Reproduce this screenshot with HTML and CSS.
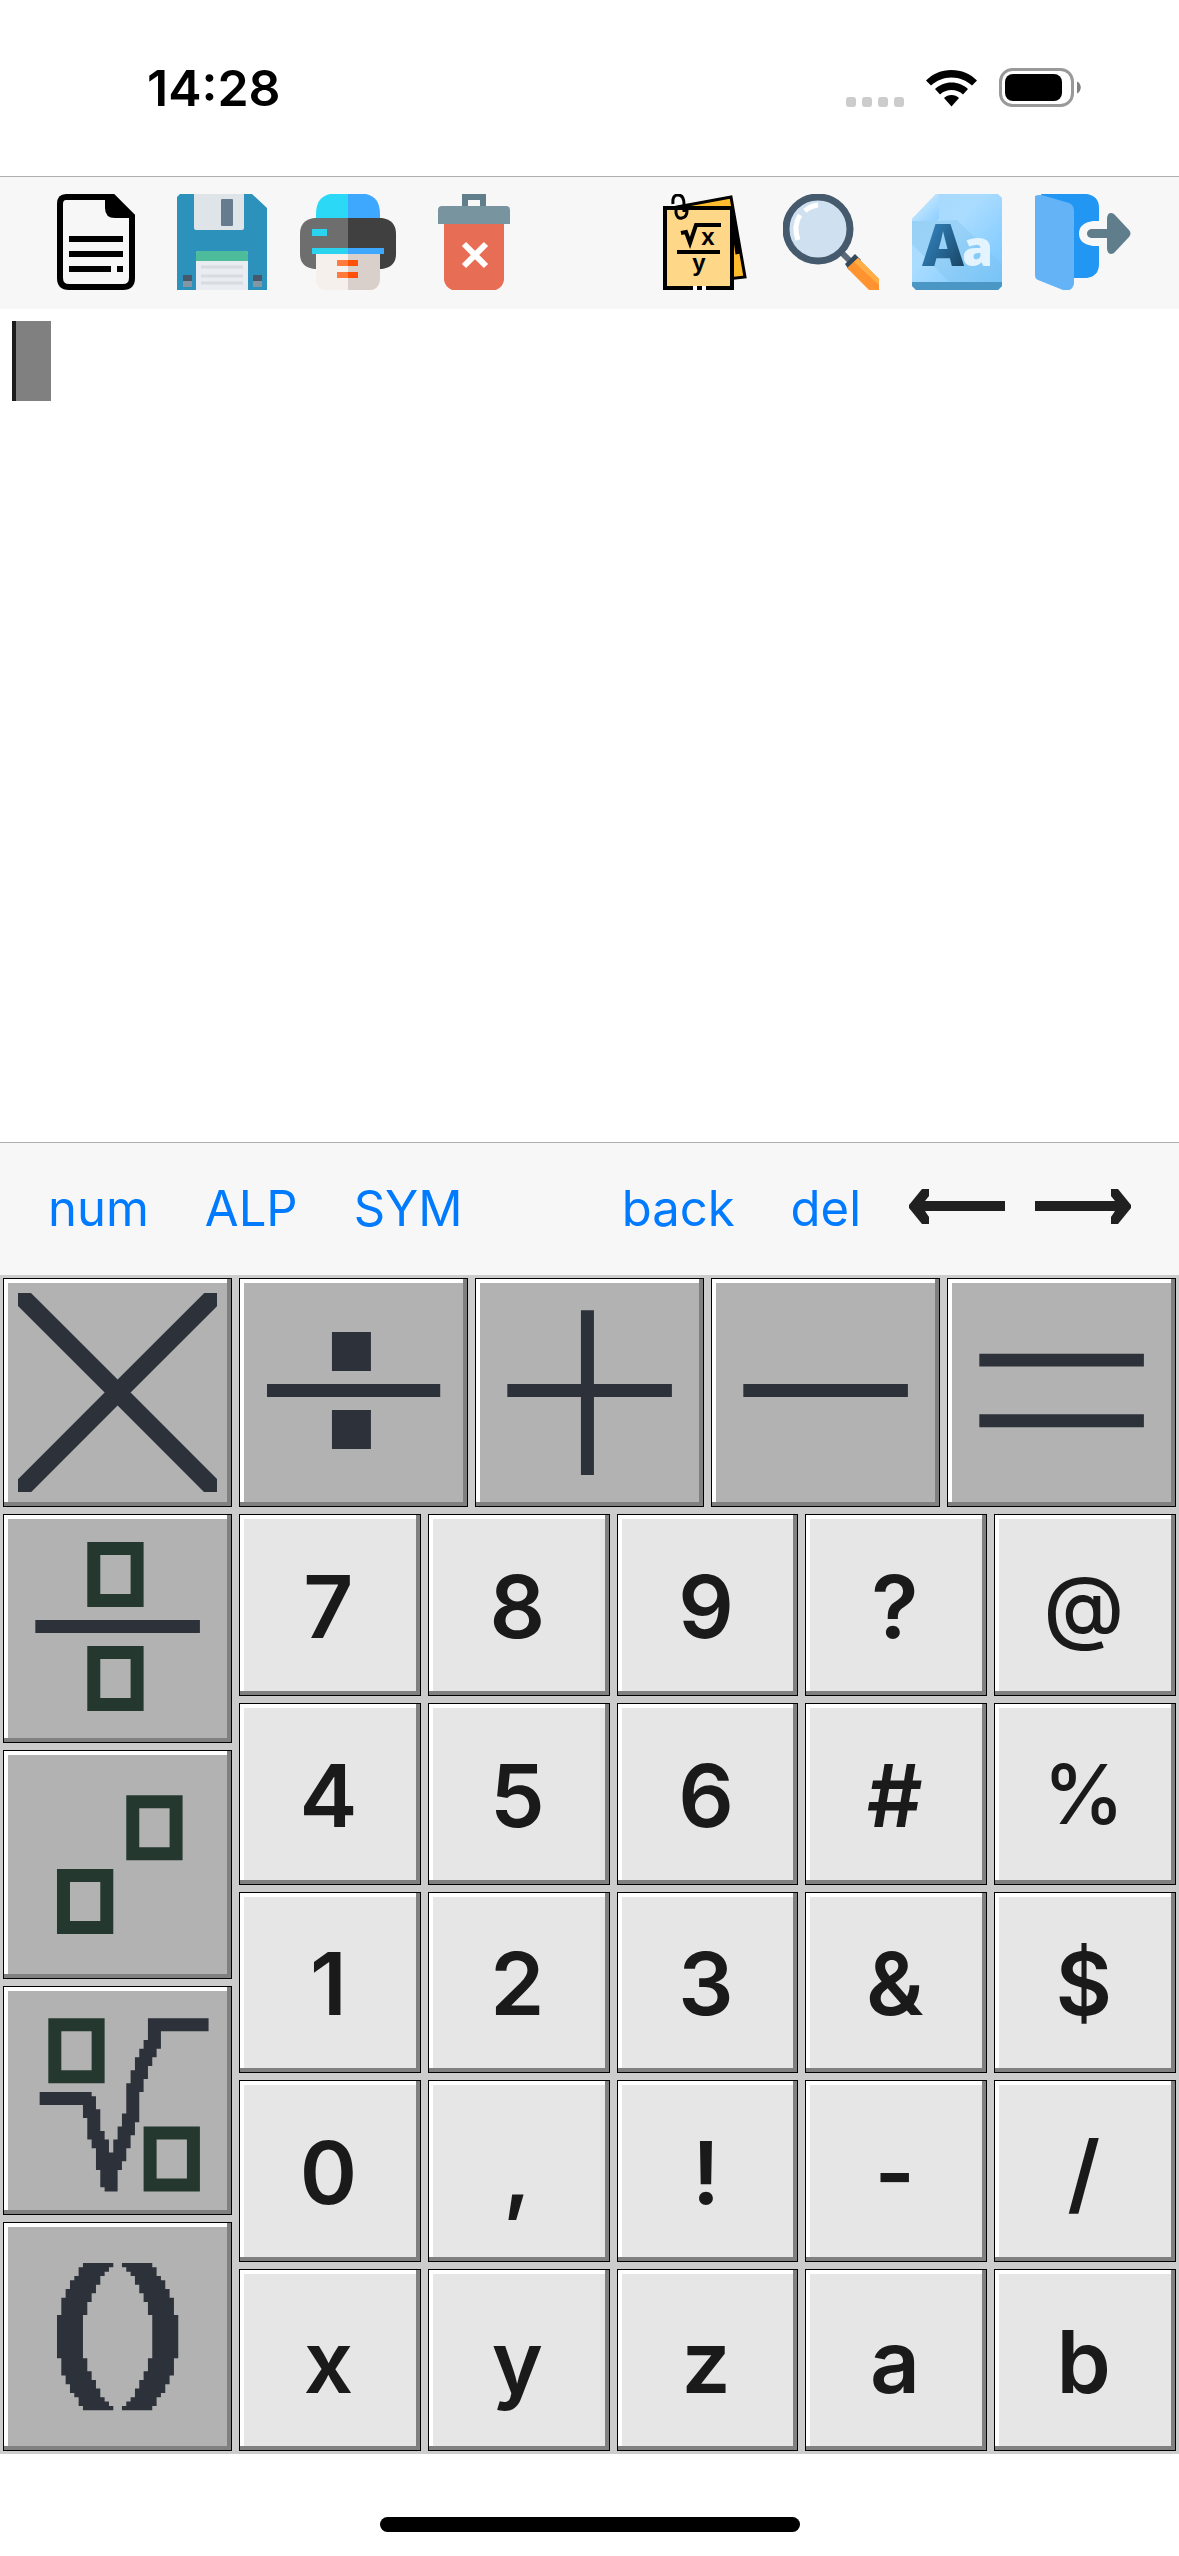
FILE: index.html
```html
<!DOCTYPE html>
<html lang="en">
<head>
    <meta charset="UTF-8" />
    <meta name="viewport" content="width=device-width, initial-scale=1.0"/>
    <title>Math Editor</title>
    <link rel="stylesheet" href="styles.css">
</head>
<body>
<header class="status-bar">
    <span class="time">14:28</span>
    <div class="status-icons">
        <span class="dots"><i></i><i></i><i></i><i></i></span>
        <svg class="wifi" viewBox="0 0 51 38" aria-hidden="true">
            <path d="M25.500 1C35.500 1 44.500 5 51 11.500L46 16.500C40.500 11.500 33.500 8.500 25.500 8.500S10.500 11.500 5 16.500L0 11.500C6.500 5 15.500 1 25.500 1z"/>
            <path d="M25.500 13.500C32 13.500 37.500 16 42 20L37 25.500C34 22.500 30 21 25.500 21S17 22.500 14 25.500L9 20C13.500 16 19 13.500 25.500 13.500z"/>
            <path d="M25.500 26C28.500 26 31 27 33 29L25.500 37.500 18 29C20 27 22.500 26 25.500 26z"/>
        </svg>
        <svg class="battery" viewBox="0 0 82 39" aria-hidden="true">
            <rect x="1.500" y="1.500" width="72" height="36" rx="12" fill="none" stroke="#999" stroke-width="3"/>
            <rect x="6" y="6" width="57" height="27" rx="8"/>
            <path d="M78 13.500C83 15.500 83 23.500 78 25.500z" fill="#808080"/>
        </svg>
    </div>
</header>

<nav class="toolbar">
    <div class="group">
        <button type="button" class="icon-btn" aria-label="New">
            <svg viewBox="0 0 96 96">
                <path d="M18 3H65L84 22V84Q84 93 75 93H21Q12 93 12 84V10Q12 3 18 3z" fill="none" stroke="#000" stroke-width="6"/>
                <path d="M57 0H65L87 22V24H67Q57 24 57 14z"/>
                <path d="M21 42h54v6H21zM21 57h54v6H21zM21 72h42v6H21zM69 72h6v6h-6z"/>
            </svg>
        </button>
        <button type="button" class="icon-btn" aria-label="Save">
            <svg viewBox="0 0 96 96">
                <path d="M6 0H78L93 14V96H3V3z" fill="#2c92bc"/>
                <path d="M20 0H70V34Q70 36 68 36H22Q20 36 20 34z" fill="#dfe4e8"/>
                <rect x="47" y="5" width="12" height="27" rx="1" fill="#667b8e"/>
                <path d="M22 96V60Q22 57 25 57H71Q74 57 74 60V96z" fill="#e9edf2"/>
                <path d="M22 67V60Q22 57 25 57H71Q74 57 74 60V67z" fill="#4cbc9a"/>
                <path d="M27 73H69M27 82H69M27 89H69" stroke="#d8dce1" stroke-width="3"/>
                <path d="M9 81h9v6H9zM79 81h9v6h-9z" fill="#46586a"/>
                <path d="M9 87h9v6H9zM79 87h9v6h-9z" fill="#8495a3"/>
            </svg>
        </button>
        <button type="button" class="icon-btn" aria-label="Print">
            <svg viewBox="0 0 96 96">
                <path d="M48 0H30Q16 3 16 20V26H48z" fill="#2bd9f7"/>
                <path d="M48 0H66Q80 3 80 20V26H48z" fill="#3ea8ff"/>
                <path d="M48 24H14Q0 26 0 40V60Q0 73 14 75H48z" fill="#6e6e6e"/>
                <path d="M48 24H82Q96 26 96 40V60Q96 73 82 75H48z" fill="#404040"/>
                <path d="M48 60H16V86Q17 94 24 96H48z" fill="#f5f0ec"/>
                <path d="M48 60H80V86Q79 94 72 96H48z" fill="#d9d0cb"/>
                <path d="M12 35h15v7H12zM12 54h36v6H12z" fill="#2bd4ee"/>
                <path d="M48 54h36v6H48z" fill="#3ea8ff"/>
                <path d="M37 66h11v6H37zM37 78h11v6H37z" fill="#ff7a3c"/>
                <path d="M48 66h10v6H48zM48 78h10v6H48z" fill="#ff5008"/>
            </svg>
        </button>
        <button type="button" class="icon-btn" aria-label="Delete">
            <svg viewBox="0 0 96 96">
                <path d="M36 0H60V14H36zM42 6V12H54V6z" fill="#617f8b" fill-rule="evenodd"/>
                <path d="M18 30H78V86Q77 93 70 96H26Q19 93 18 86z" fill="#e76e55"/>
                <path d="M12 30V16Q12 12 16 12H80Q84 12 84 16V30z" fill="#78949e"/>
                <path d="M38 50L60 72M60 50L38 72" stroke="#fff" stroke-width="6"/>
            </svg>
        </button>
    </div>
    <div class="group">
        <button type="button" class="icon-btn" aria-label="Formulas">
            <svg viewBox="0 0 96 96">
                <path d="M20 13L74 3 88 83 62 86z" fill="#fdbb2d" stroke="#000" stroke-width="3"/>
                <path d="M74 14L81 60" stroke="#000" stroke-width="5"/>
                <path d="M8 14H75V94H8z" fill="#ffd788" stroke="#000" stroke-width="4"/>
                <path d="M36 94h4M45 94h4" stroke="#fff" stroke-width="4"/>
                <path d="M16 10Q15 1 21 1T27 10V18M19 12V19Q20 25 25 24T30 17V12" fill="none" stroke="#000" stroke-width="3"/>
                <path d="M24 39L29 38 33 49 39 31H64" fill="none" stroke="#000" stroke-width="4"/>
                <path d="M20 58H63" stroke="#000" stroke-width="4"/>
                <text class="formula" x="51" y="51">x</text>
                <text class="formula" x="42" y="77">y</text>
            </svg>
        </button>
        <button type="button" class="icon-btn" aria-label="Search">
            <svg viewBox="0 0 96 96">
                <path d="M58 58L70 70" stroke="#5b6b7a" stroke-width="6"/>
                <path d="M62 70L72 60 78 66 66 76z" fill="#34485c"/>
                <path d="M64 74L75 64 96 85V96H86z" fill="#ff9330"/>
                <path d="M71 68L75 64 96 85V91z" fill="#ffad45"/>
                <circle cx="35" cy="35" r="32" fill="#cfe1f1" stroke="#465a6e" stroke-width="7"/>
                <path d="M15 46Q10 32 17 21M22 17Q27 12 35 11" fill="none" stroke="#fff" stroke-width="5"/>
            </svg>
        </button>
        <button type="button" class="icon-btn" aria-label="Font">
            <svg viewBox="0 0 96 96">
                <defs>
                    <linearGradient id="page" x1="0" y1="0" x2="1" y2="1">
                        <stop offset="0" stop-color="#a5d8fb"/>
                        <stop offset="0.4" stop-color="#aadcff"/>
                        <stop offset="1" stop-color="#70c4ff"/>
                    </linearGradient>
                    <linearGradient id="fold" x1="0" y1="0" x2="1" y2="1">
                        <stop offset="0.3" stop-color="#c4e7ff"/>
                        <stop offset="1" stop-color="#8cceff"/>
                    </linearGradient>
                    <linearGradient id="letter" x1="0" y1="0" x2="1" y2="1">
                        <stop offset="0.3" stop-color="#2e7ab0"/>
                        <stop offset="1" stop-color="#143a55"/>
                    </linearGradient>
                </defs>
                <path d="M27 0H89L93 4V92L89 96H7L3 92V25z" fill="url(#page)"/>
                <path d="M3 27H30L48 26 93 70V88H40L3 50z" fill="#7fbfe8" opacity="0.35"/>
                <path d="M3 88H93V92L89 96H7L3 92z" fill="#4a96c4"/>
                <path d="M27 0H30V24Q29 27 26 27H3V25z" fill="url(#fold)"/>
                <text class="big-a" x="13" y="72" fill="url(#letter)">A</text>
                <text class="small-a" x="53" y="72">a</text>
            </svg>
        </button>
        <button type="button" class="icon-btn" aria-label="Exit">
            <svg viewBox="0 0 96 96">
                <path d="M6 0H52Q64 2 64 14V27H58Q44 29 44 39.500T58 52H64V70Q64 82 52 84H30z" fill="#2196f3"/>
                <path d="M0 2Q4 0 10 2L34 9Q39 11 39 17V90Q37 98 28 96L3 86Q0 85 0 81z" fill="#64b3f7"/>
                <path d="M56 35H72V24Q73 17 79 20L94 36Q97 39.500 94 43L79 59Q73 62 72 55V44H56Q52 43 52 39.500T56 35z" fill="#607d8b"/>
            </svg>
        </button>
    </div>
</nav>

<main class="editor">
    <div class="caret"></div>
</main>

<nav class="toolbar">
    <div class="group modes">
        <button type="button" class="text-btn">num</button>
        <button type="button" class="text-btn">ALP</button>
        <button type="button" class="text-btn">SYM</button>
    </div>
    <div class="group">
        <div class="group edits">
            <button type="button" class="text-btn">back</button>
            <button type="button" class="text-btn">del</button>
        </div>
        <button type="button" class="icon-btn" aria-label="Move left">
            <svg viewBox="0 0 96 96">
                <path d="M0 45L13 29H20V36L16 41H96V51H16L20 57V64H13L0 48z" fill="#202020"/>
            </svg>
        </button>
        <button type="button" class="icon-btn" aria-label="Move right">
            <svg viewBox="0 0 96 96">
                <path d="M96 45L83 29H76V36L80 41H0V51H80L76 57V64H83L96 48z" fill="#202020"/>
            </svg>
        </button>
    </div>
</nav>

<section class="keyboard">
    <button type="button" class="key key-dark" aria-label="Multiply">
        <svg viewBox="0 0 46 46"><path d="M0 0H3L23 20 43 0H46V3L26 23 46 43V46H43L23 26 3 46H0V43L20 23 0 3zM20 20h6v6h-6z"/></svg>
    </button>
    <button type="button" class="key key-dark" aria-label="Divide">
        <svg viewBox="0 0 46 46"><path d="M18 9h9v9h-9zM3 21h40v3H3zM18 27h9v9h-9z"/></svg>
    </button>
    <button type="button" class="key key-dark" aria-label="Plus">
        <svg viewBox="0 0 46 46"><path d="M4 21h38v3H4zM21 4h3v38h-3z"/></svg>
    </button>
    <button type="button" class="key key-dark" aria-label="Minus">
        <svg viewBox="0 0 46 46"><path d="M4 21h38v3H4z"/></svg>
    </button>
    <button type="button" class="key key-dark" aria-label="Equals">
        <svg viewBox="0 0 46 46"><path d="M4 14h38v3H4zM4 28h38v3H4z"/></svg>
    </button>

    <button type="button" class="key key-dark key-side" aria-label="Fraction">
        <svg viewBox="0 0 46 46">
            <path d="M4 21h38v3H4z"/>
            <path class="slot" d="M17.500 4.500h10v12h-10zM17.500 28.500h10v12h-10z"/>
        </svg>
    </button>
    <button type="button" class="key key-dark key-side" aria-label="Power">
        <svg viewBox="0 0 46 46">
            <path class="slot" d="M26.500 8.500h10v12h-10zM10.500 25.500h10v12h-10z"/>
        </svg>
    </button>
    <button type="button" class="key key-dark key-side" aria-label="Root">
        <svg viewBox="0 0 46 46">
            <path d="M5 21H17V22H18V25H19V30H20V32H21V35H22V32H23V29H24V26H25V19H26V16H27V13H28V11H29V9H30V4H44V7H33V11H32V13H31V15H30V18H29V21H28V28H27V31H26V34H25V37H24V39H23V44H20V43H19V39H18V34H17V32H16V27H15V24H5z"/>
            <path class="slot" d="M8.500 5.500h10v12h-10zM30.500 30.500h10v12h-10z"/>
        </svg>
    </button>
    <button type="button" class="key key-dark key-side" aria-label="Brackets">
        <svg viewBox="0 0 46 46">
            <path d="M15 6H22V7H21V8H20V9H19V11H18V13H17V15H16V18H15V28H16V31H17V33H18V35H19V37H20V38H21V39H22V40H15V39H14V37H13V36H12V34H11V32H10V28H9V18H10V14H11V12H12V10H13V9H14V7H15z"/>
            <path d="M31 6H24V7H25V8H26V9H27V11H28V13H29V15H30V18H31V28H30V31H29V33H28V35H27V37H26V38H25V39H24V40H31V39H32V37H33V36H34V34H35V32H36V28H37V18H36V14H35V12H34V10H33V9H32V7H31z"/>
        </svg>
    </button>

    <div class="pad">
        <button type="button" class="key">7</button>
        <button type="button" class="key">8</button>
        <button type="button" class="key">9</button>
        <button type="button" class="key">?</button>
        <button type="button" class="key key-light">@</button>

        <button type="button" class="key">4</button>
        <button type="button" class="key">5</button>
        <button type="button" class="key">6</button>
        <button type="button" class="key">#</button>
        <button type="button" class="key key-light">%</button>

        <button type="button" class="key">1</button>
        <button type="button" class="key">2</button>
        <button type="button" class="key">3</button>
        <button type="button" class="key">&amp;</button>
        <button type="button" class="key">$</button>

        <button type="button" class="key">0</button>
        <button type="button" class="key">,</button>
        <button type="button" class="key">!</button>
        <button type="button" class="key">-</button>
        <button type="button" class="key">/</button>

        <button type="button" class="key">x</button>
        <button type="button" class="key">y</button>
        <button type="button" class="key">z</button>
        <button type="button" class="key">a</button>
        <button type="button" class="key">b</button>
    </div>
</section>

<footer class="home">
    <div class="home-bar"></div>
</footer>
</body>
</html>
```
FILE: styles.css
```css
* {
    box-sizing: border-box;
}

body {
    margin: 0;
    min-height: 100vh;
    display: flex;
    flex-direction: column;
    background-color: #fff;
    font-family: Inter, Roboto, sans-serif;
}

button {
    margin: 0;
    padding: 0;
    border: none;
    background: none;
    font-family: inherit;
    cursor: pointer;
}

svg {
    display: block;
}

/* Status bar */
.status-bar {
    display: flex;
    justify-content: space-between;
    height: 176px;
    padding: 58px 98px 0 147px;
}

.time {
    font-size: 50px;
    font-weight: 600;
    line-height: 60px;
}

.status-icons {
    display: flex;
    align-items: flex-end;
    height: 49px;
}

.dots {
    display: flex;
    gap: 6px;
    margin-right: 22px;
}

.dots i {
    width: 10px;
    height: 10px;
    border-radius: 3px;
    background-color: #ccc;
}

.wifi {
    width: 51px;
    height: 38px;
    margin-right: 22px;
}

.battery {
    width: 82px;
    height: 39px;
}

/* Toolbars */
.toolbar {
    display: flex;
    justify-content: space-between;
    align-items: center;
    height: 133px;
    padding: 0 48px 2px;
    border-top: 1px solid #b0b0b0;
    background-color: #f7f7f7;
}

.group {
    display: flex;
    align-items: center;
    gap: 30px;
}

.modes,
.edits {
    gap: 56px;
}

.edits {
    margin-right: 18px;
}

.icon-btn {
    width: 96px;
    height: 96px;
}

.text-btn {
    padding-top: 3px;
    color: #007aff;
    font-size: 49px;
    line-height: 60px;
}

.formula {
    font-family: "Liberation Sans", sans-serif;
    font-size: 24px;
    font-weight: bold;
    text-anchor: middle;
}

.big-a,
.small-a {
    font-family: "Open Sans", sans-serif;
    font-size: 58px;
    font-weight: 800;
}

.small-a {
    font-size: 50px;
    fill: #e4f4ff;
}

/* Editor */
.editor {
    flex: 1;
    padding: 12px;
}

.caret {
    width: 39px;
    height: 80px;
    border-left: 4px solid #1c1c1c;
    background-color: #808080;
}

/* Keyboard */
.keyboard {
    display: grid;
    grid-template-columns: repeat(5, 1fr);
    gap: 7px;
    padding: 3px;
    background-color: #ccc;
}

.key {
    display: flex;
    align-items: center;
    justify-content: center;
    aspect-ratio: 1;
    background-color: #e6e6e6;
    box-shadow: inset 1px 1px #000, inset -1px -1px #000, inset -5px -5px #808080, inset 5px 5px #fff;
    color: #1a1a1a;
    font-size: 87px;
    font-weight: 600;
    line-height: 1;
}

.pad .key {
    padding: 3px 3px 0 0;
}

.pad .key-light {
    font-size: 82px;
    font-weight: 500;
}

.key-dark {
    background-color: #b2b2b2;
}

.key-side {
    grid-column: 1;
}

.key svg {
    width: 87%;
    fill: #2d3139;
}

.key .slot {
    fill: none;
    stroke: #24382f;
    stroke-width: 3;
}

.pad {
    grid-column: 2 / 6;
    grid-row: 2 / 6;
    display: grid;
    grid-template-columns: repeat(5, 1fr);
    gap: 7px;
}

/* Home indicator */
.home {
    display: flex;
    justify-content: center;
    padding: 63px 0 24px;
}

.home-bar {
    width: 420px;
    height: 15px;
    border-radius: 8px;
    background-color: #000;
}
```
